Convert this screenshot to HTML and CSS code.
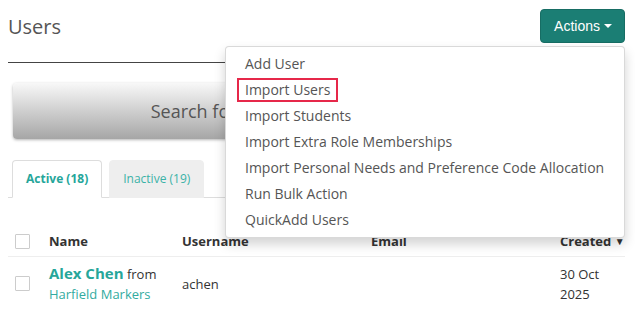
FILE: index.html
```html
<!DOCTYPE html>
<html lang="en">
<head>
    <meta charset="UTF-8">
    <meta name="viewport" content="width=device-width, initial-scale=1.0">
    <title>Users</title>
    <link rel="stylesheet" href="styles.css">
</head>
<body>
    <div class="page">
        <div class="page-header">
            <h1>Users</h1>
            <div class="actions">
                <button class="actions-btn">Actions <span class="caret"></span></button>
                <ul class="dropdown">
                    <li><a href="#">Add User</a></li>
                    <li><a href="#"><span class="highlight">Import Users</span></a></li>
                    <li><a href="#">Import Students</a></li>
                    <li><a href="#">Import Extra Role Memberships</a></li>
                    <li><a href="#">Import Personal Needs and Preference Code Allocation</a></li>
                    <li><a href="#">Run Bulk Action</a></li>
                    <li><a href="#">QuickAdd Users</a></li>
                </ul>
            </div>
        </div>

        <div class="search-bar">Search for users by name, email or UPN</div>

        <ul class="tabs">
            <li class="tab active">Active (18)</li>
            <li class="tab">Inactive (19)</li>
        </ul>

        <div class="user-table">
            <div class="row head">
                <div class="cell check"><span class="checkbox"></span></div>
                <div class="cell">Name</div>
                <div class="cell">Username</div>
                <div class="cell">Email</div>
                <div class="cell">Created <span class="sort">&#9660;</span></div>
            </div>
            <div class="row">
                <div class="cell check"><span class="checkbox"></span></div>
                <div class="cell"><a class="user-name" href="#">Alex Chen</a> from<br><a class="org" href="#">Harfield Markers</a></div>
                <div class="cell">achen</div>
                <div class="cell"></div>
                <div class="cell date">30 Oct<br>2025</div>
            </div>
        </div>
    </div>
</body>
</html>
```

FILE: styles.css
```css
body {
    margin: 0;
    font-family: "Open Sans", sans-serif;
    font-size: 13px;
    color: #333;
    background-color: #ffffff;
}
a {
    text-decoration: none;
}
.page {
    padding: 0 10px 0 8px;
}
.page-header {
    display: flex;
    justify-content: space-between;
    align-items: flex-start;
    height: 62px;
    border-bottom: 1px solid #444;
}
.page-header h1 {
    margin: 13px 0 0;
    font-size: 20px;
    font-weight: normal;
    line-height: 27px;
    color: #555;
}
.actions {
    position: relative;
    margin-top: 9px;
}
.actions-btn {
    display: flex;
    align-items: center;
    height: 34px;
    padding: 0 12px 0 13px;
    border: 1px solid #176d64;
    border-radius: 4px;
    background-color: #1b7e74;
    color: #ffffff;
    font-family: "Liberation Sans", Arial, sans-serif;
    font-size: 14px;
}
.caret {
    display: inline-block;
    margin-left: 4px;
    border-top: 4px solid #ffffff;
    border-left: 4px solid transparent;
    border-right: 4px solid transparent;
}
.dropdown {
    position: absolute;
    top: 37px;
    right: 0;
    z-index: 10;
    width: 398px;
    margin: 0;
    padding: 4px 0;
    list-style: none;
    background-color: #ffffff;
    border: 1px solid rgba(0, 0, 0, 0.15);
    border-radius: 4px;
    box-shadow: 0 6px 12px rgba(0, 0, 0, 0.175);
}
.dropdown a {
    display: block;
    padding: 0 19px;
    line-height: 26px;
    font-size: 14px;
    color: #555;
    white-space: nowrap;
}
.highlight {
    margin: 0 -8px;
    padding: 0 6px 1px;
    border: 2px solid #e6284a;
}
.search-bar {
    margin: 20px 3px 0 5px;
    height: 56px;
    line-height: 56px;
    text-align: center;
    font-size: 18px;
    color: #555;
    white-space: nowrap;
    border-radius: 4px;
    background: linear-gradient(#f8f8f8, #a6a6a6);
    box-shadow: 0 1px 3px rgba(0, 0, 0, 0.3);
}
.tabs {
    display: flex;
    gap: 7px;
    margin: 21px 0 0;
    padding: 0 0 0 4px;
    list-style: none;
    border-bottom: 1px solid #ddd;
}
.tab {
    margin-bottom: -1px;
    padding: 9px 13px 10px;
    font-size: 12px;
    line-height: 17px;
    color: #3bb2a7;
    background-color: #eeeeee;
    border: 1px solid #eeeeee;
    border-radius: 4px 4px 0 0;
}
.tab.active {
    font-weight: bold;
    color: #26a69a;
    background-color: #ffffff;
    border-color: #ddd;
    border-bottom-color: #ffffff;
}
.user-table {
    margin-top: 24px;
}
.row {
    display: grid;
    grid-template-columns: 41px 133px 189px 189px 1fr;
    align-items: center;
    line-height: 20px;
    padding: 6px 0 8px;
}
.row.head {
    padding: 9px 0 5px;
    border-bottom: 1px solid #eee;
    font-weight: bold;
    color: #333;
    white-space: nowrap;
}
.cell.check {
    padding-left: 7px;
}
.checkbox {
    display: block;
    width: 13px;
    height: 13px;
    border: 1px solid #ccc;
    border-radius: 1px;
}
.sort {
    font-size: 10px;
    vertical-align: 1px;
}
.user-name {
    font-size: 15px;
    font-weight: bold;
    color: #26a69a;
}
.org {
    color: #33aba0;
}
```
